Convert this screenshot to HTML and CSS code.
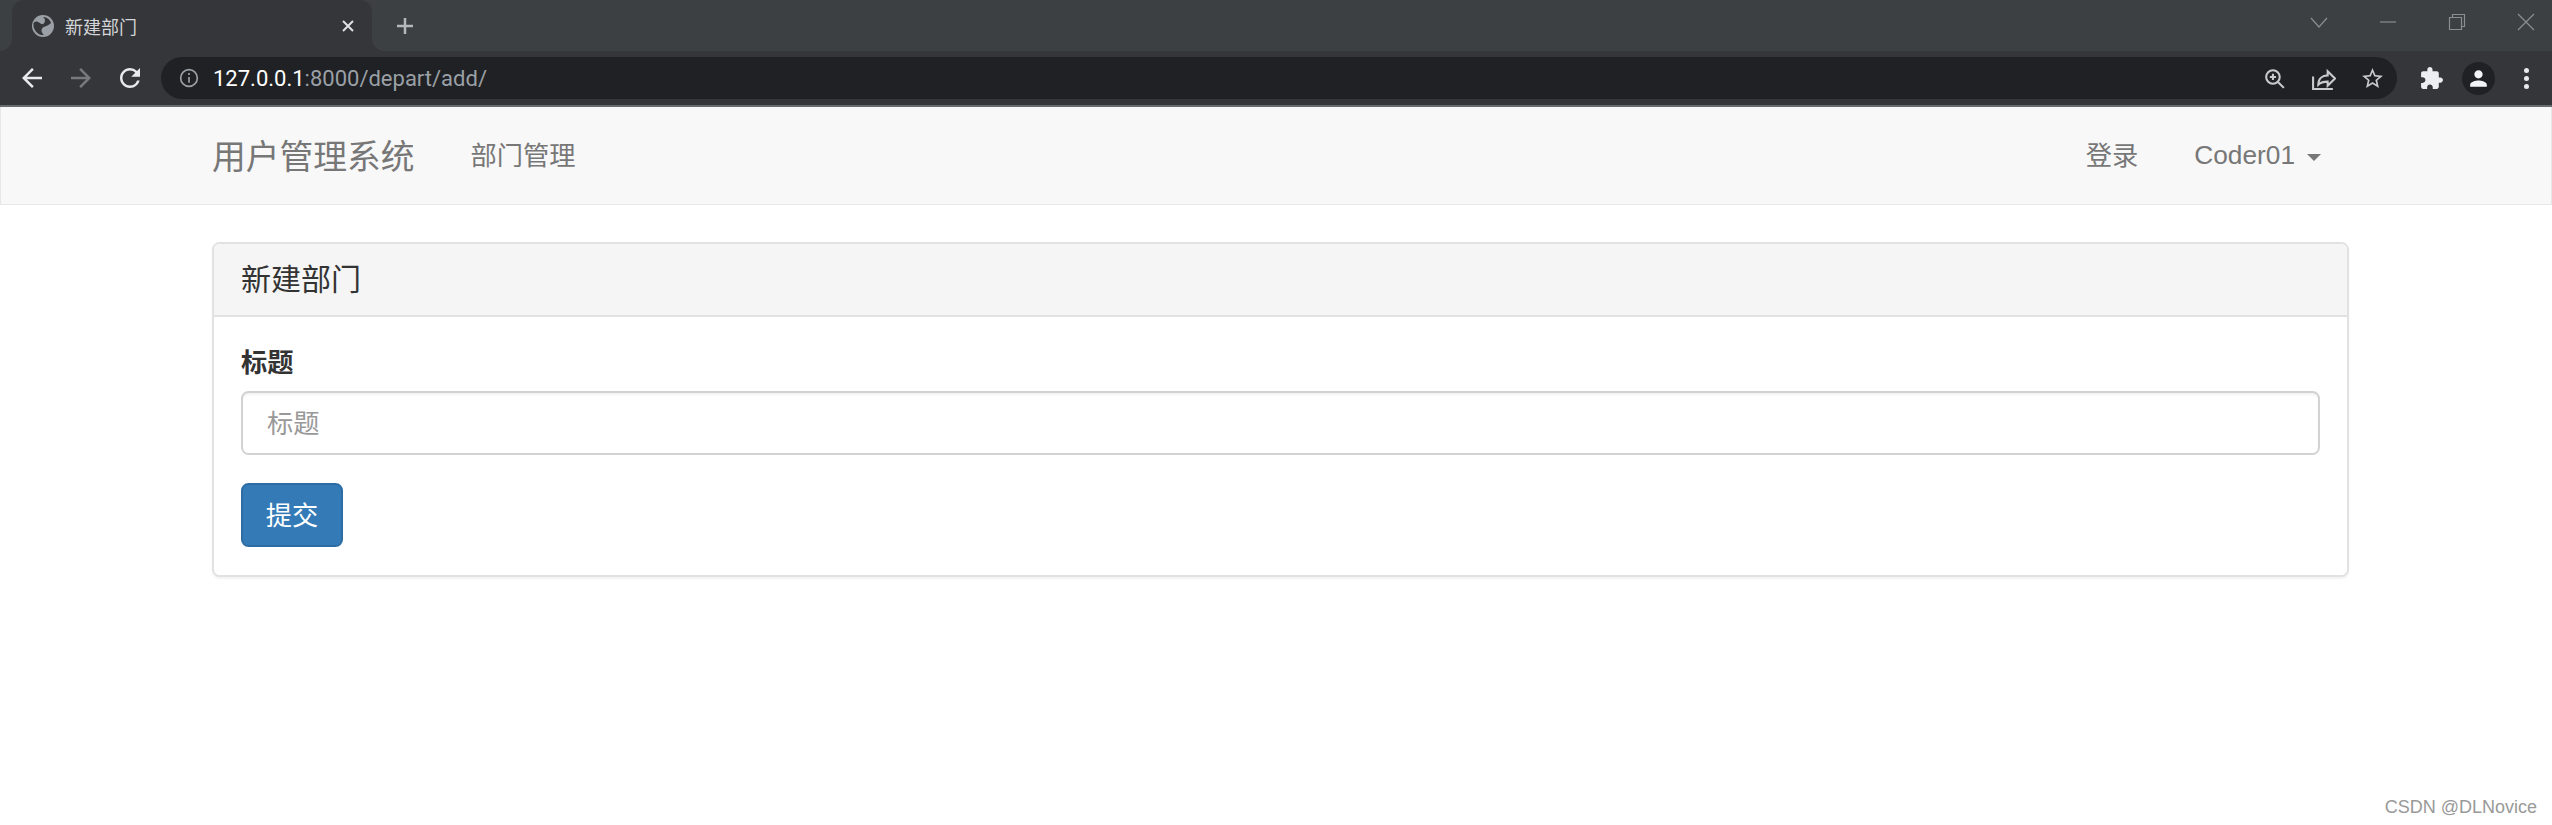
FILE: index.html
```html
<!DOCTYPE html>
<html lang="zh">
<head>
  <meta charset="UTF-8">
  <title>新建部门</title>
  <link rel="stylesheet" href="styles.css">
</head>
<body>
  <div class="tabstrip">
    <div class="tab">
      <svg class="favicon" viewBox="0 0 24 24"><circle class="globe" cx="12" cy="12" r="11"/><path class="land" d="M2.500 9c3-3 5-1 7 .5 2 1.500 3 .5 4-1 1-2 .5-4-1.500-5.500 3 0 7 2 8 6-2 2-4 3-6 3.500-2 .5-3.500 2-3.500 4 0 1.500 1 3 2.500 4.500-5 .5-9-3-10.500-8.500z"/></svg>
      <span class="tab-title">新建部门</span>
      <svg class="tab-close" viewBox="0 0 14 14"><path d="M2 2l10 10M12 2L2 12"/></svg>
    </div>
    <svg class="new-tab" viewBox="0 0 18 18"><path d="M9 1v16M1 9h16"/></svg>
    <div class="win-controls">
      <svg viewBox="0 0 18 18"><path d="M1 5l8 9 8-9"/></svg>
      <svg viewBox="0 0 18 18"><path d="M1 9h16"/></svg>
      <svg viewBox="0 0 18 18"><path d="M1.500 4.500h12v12h-12zM4.500 4.500v-3h12v12h-3"/></svg>
      <svg viewBox="0 0 18 18"><path d="M1 1l16 16M17 1L1 17"/></svg>
    </div>
  </div>

  <div class="toolbar">
    <svg class="tool" viewBox="0 0 24 24"><path d="M20 11H7.830l5.590-5.590L12 4l-8 8 8 8 1.410-1.410L7.830 13H20v-2z"/></svg>
    <svg class="tool dim" viewBox="0 0 24 24"><path d="M4 11h12.170l-5.590-5.590L12 4l8 8-8 8-1.410-1.410L16.170 13H4v-2z"/></svg>
    <svg class="tool" viewBox="0 0 24 24"><path d="M17.650 6.350A7.958 7.958 0 0 0 12 4c-4.420 0-7.990 3.580-7.990 8s3.570 8 7.990 8c3.730 0 6.840-2.550 7.730-6h-2.080A5.990 5.990 0 0 1 12 18c-3.310 0-6-2.690-6-6s2.690-6 6-6c1.660 0 3.140.69 4.220 1.780L13 11h7V4l-2.350 2.350z"/></svg>
    <div class="omnibox">
      <svg class="info" viewBox="0 0 18 18"><circle cx="9" cy="9" r="7.500"/><path d="M9 8v5.200M9 4.600v1.800"/></svg>
      <span class="url"><b>127.0.0.1</b>:8000/depart/add/</span>
      <div class="omni-icons">
        <svg viewBox="0 0 24 24"><circle cx="10.500" cy="10.500" r="6.500"/><path d="M15.500 15.500l5.500 5.500M10.500 7.500v6M7.500 10.500h6"/></svg>
        <svg viewBox="0 0 24 24"><path d="M2 10v12h19M7 18c0-6 4-9 9-9V5l7 7-7 7v-4c-4 0-7 1-9 3z"/></svg>
        <svg class="solid" viewBox="0 0 24 24"><path d="M22 9.240l-7.190-.62L12 2 9.190 8.630 2 9.240l5.460 4.730L5.820 21 12 17.270 18.180 21l-1.630-7.030L22 9.240zM12 15.400l-3.760 2.270 1-4.280-3.320-2.880 4.380-.38L12 6.100l1.710 4.040 4.380.38-3.320 2.880 1 4.280L12 15.400z"/></svg>
      </div>
    </div>
    <svg class="puzzle" viewBox="0 0 24 24"><path d="M20.500 11H19V7c0-1.100-.9-2-2-2h-4V3.500C13 2.120 11.880 1 10.500 1S8 2.120 8 3.500V5H4c-1.100 0-1.990.9-1.990 2v3.800H3.500c1.490 0 2.700 1.210 2.700 2.700s-1.210 2.700-2.700 2.700H2V20c0 1.100.9 2 2 2h3.800v-1.500c0-1.490 1.210-2.700 2.700-2.700 1.490 0 2.700 1.210 2.700 2.700V22H17c1.100 0 2-.9 2-2v-4h1.500c1.380 0 2.500-1.120 2.500-2.500S21.880 11 20.500 11z"/></svg>
    <div class="avatar">
      <svg viewBox="0 0 24 24"><path d="M12 12c2.210 0 4-1.790 4-4s-1.790-4-4-4-4 1.790-4 4 1.790 4 4 4zm0 2c-2.670 0-8 1.340-8 4v2h16v-2c0-2.660-5.330-4-8-4z"/></svg>
    </div>
    <div class="dots"><i></i><i></i><i></i></div>
  </div>

  <nav class="navbar">
    <div class="container nav-inner">
      <a class="brand">用户管理系统</a>
      <a class="nav-link cjk">部门管理</a>
      <a class="nav-link cjk push">登录</a>
      <a class="nav-link">Coder01<span class="caret"></span></a>
    </div>
  </nav>

  <div class="container">
    <div class="panel">
      <div class="panel-heading">新建部门</div>
      <div class="panel-body">
        <label class="field-label" for="title">标题</label>
        <input class="field" id="title" type="text" placeholder="标题">
        <button class="btn-primary">提交</button>
      </div>
    </div>
  </div>

  <div class="watermark">CSDN @DLNovice</div>
</body>
</html>
```

FILE: styles.css
```css
* {
  box-sizing: border-box;
}
body {
  margin: 0;
  min-height: 100vh;
  background: #fff;
  color: #333;
  font-family: "Liberation Sans", "Noto Sans CJK SC", sans-serif;
  font-size: 26.25px;
  overflow: hidden;
}

/* browser chrome */
.tabstrip {
  display: flex;
  align-items: center;
  height: 51px;
  padding-left: 12px;
  background: #3c4043;
}
.tab {
  position: relative;
  display: flex;
  align-items: center;
  width: 360px;
  height: 51px;
  padding: 0 17px 0 19px;
  background: #35363a;
  border-radius: 12px 12px 0 0;
  color: #d3d5d8;
  font-family: "Noto Sans CJK SC", sans-serif;
  font-size: 18px;
}
.tab::before,
.tab::after {
  content: "";
  position: absolute;
  bottom: 0;
  width: 12px;
  height: 12px;
}
.tab::before {
  left: -12px;
  background: radial-gradient(circle at 0 0, #3c4043 11.500px, #35363a 12px);
}
.tab::after {
  right: -12px;
  background: radial-gradient(circle at 100% 0, #3c4043 11.500px, #35363a 12px);
}
.favicon {
  width: 24px;
  height: 24px;
  margin-right: 10px;
}
.globe {
  fill: #9aa0a6;
}
.land {
  fill: #35363a;
}
.tab-title {
  flex: 1;
}
.tab-close {
  width: 14px;
  height: 14px;
  fill: none;
  stroke: #dfe1e5;
  stroke-width: 2;
}
.new-tab {
  width: 18px;
  height: 18px;
  margin-left: 24px;
  fill: none;
  stroke: #b4b7bb;
  stroke-width: 2.500;
}
.win-controls {
  display: flex;
  gap: 51px;
  margin-left: auto;
  margin-right: 17px;
  margin-top: -8px;
}
.win-controls svg {
  width: 18px;
  height: 18px;
  fill: none;
  stroke: #8b8e91;
  stroke-width: 1.200;
}

.toolbar {
  display: flex;
  align-items: center;
  height: 56px;
  padding-left: 17px;
  background: #35363a;
  border-bottom: 2px solid #6a6b6e;
}
.tool {
  width: 30px;
  height: 30px;
  margin-right: 19px;
  fill: #e8eaed;
}
.tool.dim {
  fill: #77797d;
}
.omnibox {
  display: flex;
  align-items: center;
  width: 2236px;
  height: 42px;
  margin-left: -3px;
  padding: 0 12px 0 18px;
  background: #202124;
  border-radius: 21px;
}
.info {
  width: 20px;
  height: 20px;
  margin-right: 14px;
  fill: none;
  stroke: #9aa0a6;
  stroke-width: 1.500;
}
.url {
  color: #9aa0a6;
  font-family: "Roboto", sans-serif;
  font-size: 22px;
}
.url b {
  color: #fff;
  font-weight: 400;
}
.omni-icons {
  display: flex;
  gap: 24px;
  margin-left: auto;
}
.omni-icons svg {
  width: 25px;
  height: 25px;
  fill: none;
  stroke: #c8cbce;
  stroke-width: 2;
}
.omni-icons svg.solid {
  fill: #c8cbce;
  stroke: none;
}
.puzzle {
  width: 25px;
  height: 25px;
  margin-left: 22px;
  fill: #eceef1;
}
.avatar {
  display: flex;
  align-items: center;
  justify-content: center;
  width: 33px;
  height: 33px;
  margin-left: 18px;
  background: #202124;
  border-radius: 50%;
}
.avatar svg {
  width: 25px;
  height: 25px;
  fill: #f1f3f4;
}
.dots {
  display: flex;
  flex-direction: column;
  gap: 3px;
  margin-left: 29px;
}
.dots i {
  width: 5px;
  height: 5px;
  background: #e8eaed;
  border-radius: 50%;
}

/* page */
.container {
  width: 2137px;
  margin-left: 212px;
}
.navbar {
  height: 98px;
  background: #f8f8f8;
  border: 1px solid #e7e7e7;
  border-top: 0;
  color: #777;
}
.nav-inner {
  display: flex;
  align-items: center;
  height: 97px;
  margin-left: 211px;
}
.brand {
  margin-right: 28px;
  padding-bottom: 3px;
  font-size: 33.750px;
}
.nav-link {
  padding: 0 28px;
}
.cjk {
  padding-bottom: 3px;
}
.push {
  margin-left: auto;
}
.caret {
  display: inline-block;
  margin-left: 12px;
  vertical-align: middle;
  border-top: 7.500px solid #777;
  border-left: 7.500px solid transparent;
  border-right: 7.500px solid transparent;
}
.panel {
  margin-top: 37px;
  background: #fff;
  border: 2px solid #e2e2e2;
  border-radius: 7.500px;
  box-shadow: 0 2px 2px rgba(0, 0, 0, 0.05);
}
.panel-heading {
  height: 73px;
  padding: 0 27px;
  background: #f5f5f5;
  border-bottom: 2px solid #e2e2e2;
  border-radius: 6px 6px 0 0;
  font-size: 30px;
  line-height: 72px;
}
.panel-body {
  padding: 27px 27px 28px;
}
.field-label {
  display: block;
  height: 47px;
  font-weight: 700;
  line-height: 39px;
}
.field {
  display: block;
  width: 100%;
  height: 64px;
  margin-bottom: 28px;
  padding: 2px 24px 0;
  border: 2px solid #d2d2d2;
  border-radius: 7.500px;
  box-shadow: inset 0 2px 2px rgba(0, 0, 0, 0.05);
  color: #555;
  font: inherit;
}
.field::placeholder {
  color: #999;
}
.btn-primary {
  display: block;
  width: 102px;
  height: 64px;
  padding: 0 0 2px;
  background: #337ab7;
  border: 2px solid #2e6da4;
  border-radius: 7.500px;
  color: #fff;
  font: inherit;
}
.watermark {
  position: absolute;
  right: 15px;
  bottom: 7px;
  color: #999;
  font-size: 18px;
}
```
